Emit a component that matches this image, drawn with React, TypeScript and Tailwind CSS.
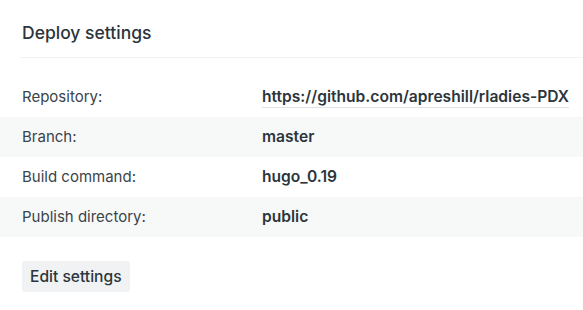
const rows = [
  { label: "Repository:", value: "https://github.com/apreshill/rladies-PDX", link: true },
  { label: "Branch:", value: "master" },
  { label: "Build command:", value: "hugo_0.19" },
  { label: "Publish directory:", value: "public" },
];

export default function App() {
  return (
    <div
      className="w-[583px] h-[310px] bg-white text-[#2f393f] overflow-hidden"
      style={{ fontFamily: "Inter, 'Noto Sans', sans-serif" }}
    >
      <div className="pl-[20px] pt-[20px]">
        <h2 className="pl-[2px] text-[17.5px] leading-[26px] font-medium text-[#2b353b] pb-[11px] border-b border-[#f2f3f3]">
          Deploy settings
        </h2>
      </div>

      <div className="mt-[19px] flex flex-col">
        {rows.map((row, i) => (
          <div
            key={row.label}
            className={`flex items-center h-[40px] text-[15px] ${i % 2 === 1 ? "bg-[#f7f9f9]" : ""}`}
          >
            <span className="w-[262px] pl-[22px] text-[#3a444a]">{row.label}</span>
            {row.link ? (
              <a className="text-[15.6px] font-semibold text-[#2b353b] border-b border-[#dfe3e5] leading-[20px]">
                {row.value}
              </a>
            ) : (
              <span className="text-[15.6px] font-semibold text-[#2b353b]">{row.value}</span>
            )}
          </div>
        ))}
      </div>

      <div className="pl-[22px] pt-[24px]">
        <button className="h-[31px] px-[8px] rounded-[3px] bg-[#f0f2f3] text-[15.6px] font-medium text-[#2b353b]">
          Edit settings
        </button>
      </div>
    </div>
  );
}
